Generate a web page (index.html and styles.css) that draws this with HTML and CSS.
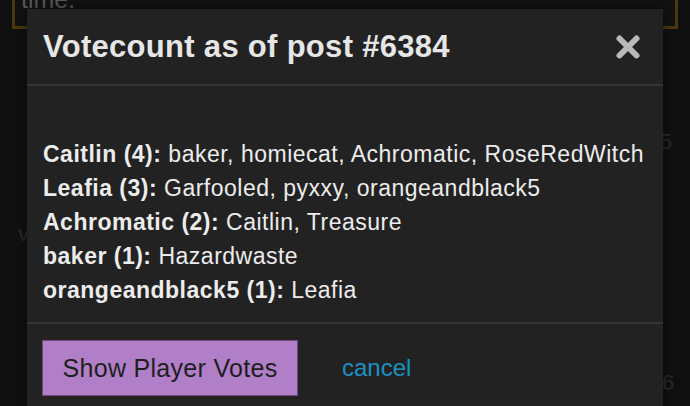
FILE: index.html
```html
<!DOCTYPE html>
<html>
<head>
<meta charset="utf-8">
<link rel="stylesheet" href="styles.css">
</head>
<body>
<div class="page">
  <div class="quote"><span class="quote-text">time.</span></div>
  <div class="bg-line bg-5">5</div>
  <div class="bg-line bg-v">v</div>
  <div class="bg-line bg-6">6</div>
</div>
<div class="modal">
  <div class="modal-header">
    <h2 class="title">Votecount as of post #6384</h2>
    <svg class="close" width="26" height="26" viewBox="0 0 26 26" aria-hidden="true">
      <path d="M4.5 4.5 L21.5 21.5 M21.5 4.5 L4.5 21.5" stroke="#b9b9b9" stroke-width="6" stroke-linecap="round"/>
    </svg>
  </div>
  <div class="modal-body">
    <div class="vote"><b>Caitlin (4):</b> baker, homiecat, Achromatic, RoseRedWitch</div>
    <div class="vote"><b>Leafia (3):</b> Garfooled, pyxxy, orangeandblack5</div>
    <div class="vote"><b>Achromatic (2):</b> Caitlin, Treasure</div>
    <div class="vote"><b>baker (1):</b> Hazardwaste</div>
    <div class="vote"><b>orangeandblack5 (1):</b> Leafia</div>
  </div>
  <div class="modal-footer">
    <button class="btn-primary">Show Player Votes</button>
    <a class="cancel">cancel</a>
  </div>
</div>
</body>
</html>
```
FILE: styles.css
```css
html, body {
  margin: 0;
  padding: 0;
  width: 690px;
  height: 406px;
  overflow: hidden;
  background: #101010;
  font-family: "Liberation Sans", Arial, sans-serif;
}
.page {
  position: relative;
  width: 690px;
  height: 406px;
}
.quote {
  margin-left: 12px;
  width: 666px;
  height: 44px;
  border: 3px solid #4a3810;
  border-top: none;
  box-sizing: border-box;
  padding-left: 6px;
  background: #121212;
}
.quote-text {
  display: block;
  margin-top: -15px;
  color: #5a5a5a;
  font-size: 25px;
}
.bg-line {
  position: absolute;
  color: #2a2a2a;
  font-size: 22px;
}
.bg-5 { left: 660px; top: 144px; }
.bg-v { left: 18px; top: 236px; }
.bg-6 { left: 662px; top: 385px; }

.modal {
  position: absolute;
  left: 27px;
  top: 9px;
  width: 636px;
  height: 420px;
  background: #222222;
  box-shadow: 0 0 12px rgba(0,0,0,0.5);
}
.modal-header {
  height: 75px;
  display: flex;
  align-items: center;
  justify-content: space-between;
  padding: 0 22px 0 16px;
  border-bottom: 2px solid #353535;
}
.title {
  margin: 0;
  color: #e6e6e6;
  font-size: 31px;
  font-weight: bold;
  letter-spacing: 0.3px;
  white-space: nowrap;
}
.close { display: block; }
.modal-body {
  padding: 51px 16px 16px;
  height: 169px;
  border-bottom: 2px solid #353535;
}
.vote {
  color: #ececec;
  font-size: 23px;
  letter-spacing: 0.5px;
  line-height: 34px;
}
.vote b { font-weight: bold; }
.modal-footer {
  display: flex;
  align-items: center;
  padding: 16px 15px;
  gap: 44px;
}
.btn-primary {
  width: 256px;
  height: 56px;
  background: #b07fc8;
  border: 1px solid #6b4a7c;
  color: #1e1e1e;
  font-family: "Liberation Sans", Arial, sans-serif;
  font-size: 25px;
  letter-spacing: 0.3px;
  padding: 0;
}
.cancel {
  color: #1b91c4;
  font-size: 24px;
}
```
